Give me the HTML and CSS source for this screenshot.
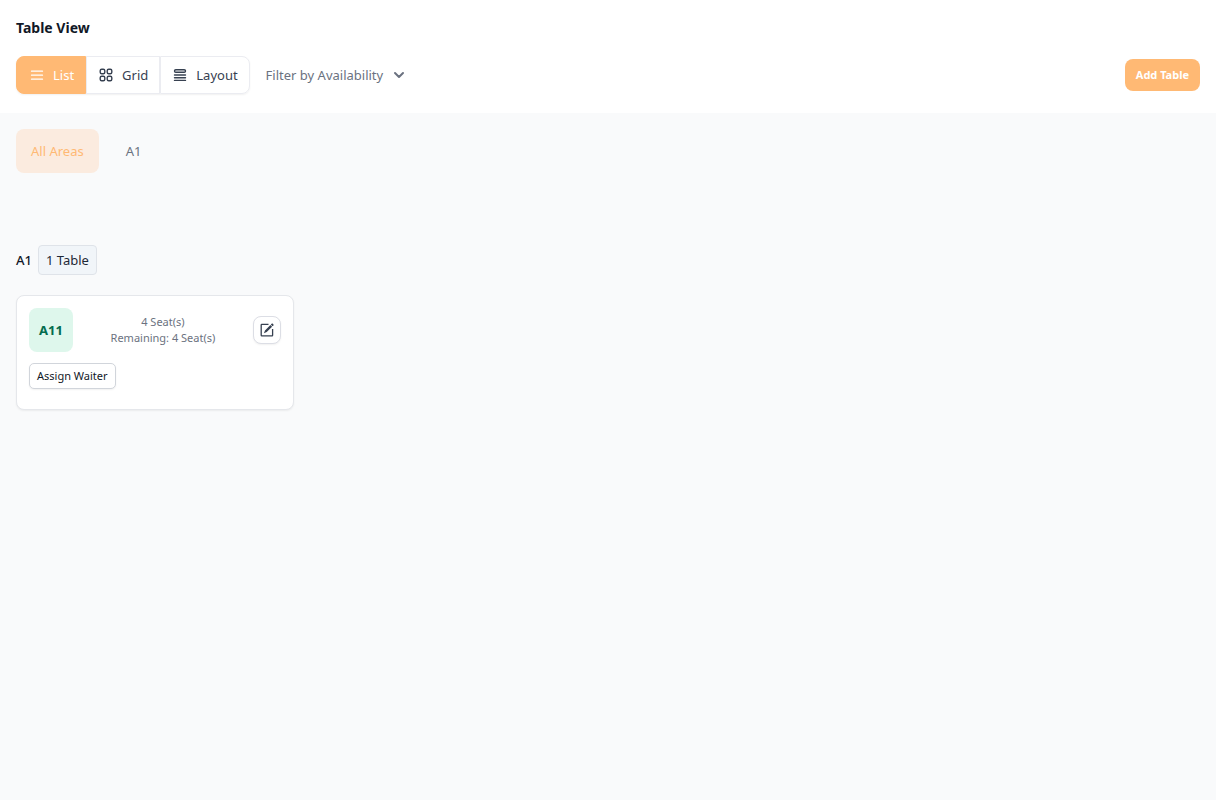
FILE: index.html
```html
<!DOCTYPE html>
<html lang="en">
<head>
  <meta charset="UTF-8" />
  <meta name="viewport" content="width=device-width, initial-scale=1.0" />
  <title>Table View</title>
  <link rel="stylesheet" href="styles.css">
</head>
<body>
  <header class="page-header">
    <h1>Table View</h1>
    <div class="toolbar">
      <div class="view-switch">
        <button type="button" class="active">
          <svg width="16" height="16" viewBox="0 0 16 16" fill="none" stroke="currentColor" stroke-width="1.3" stroke-linecap="round"><path d="M2.500 4.200h11M2.500 8.200h11M2.500 12.200h11"/></svg>
          List
        </button>
        <button type="button">
          <svg width="16" height="16" viewBox="0 0 16 16" fill="none" stroke="currentColor" stroke-width="1.400"><rect x="2.200" y="2.200" width="4.600" height="4.600" rx="1.500"/><rect x="9.200" y="2.200" width="4.600" height="4.600" rx="1.500"/><rect x="2.200" y="9.200" width="4.600" height="4.600" rx="1.500"/><rect x="9.200" y="9.200" width="4.600" height="4.600" rx="1.500"/></svg>
          Grid
        </button>
        <button type="button">
          <svg width="16" height="16" viewBox="0 0 16 16" fill="none" stroke="currentColor" stroke-width="1.400" stroke-linecap="round"><rect x="2.500" y="2.700" width="11" height="2.600" rx="1.300"/><path d="M2.500 8h11M2.500 10.700h11M2.500 13.400h11"/></svg>
          Layout
        </button>
      </div>
      <button type="button" class="filter">
        Filter by Availability
        <svg width="12" height="12" viewBox="0 0 12 12" fill="none" stroke="currentColor" stroke-width="2" stroke-linecap="round" stroke-linejoin="round"><path d="M2 4l4 4 4-4"/></svg>
      </button>
      <button type="button" class="add-table">Add Table</button>
    </div>
  </header>

  <main>
    <nav class="areas">
      <a href="#all" class="active">All Areas</a>
      <a href="#a1">A1</a>
    </nav>

    <section id="a1">
      <h2>A1 <span class="count">1 Table</span></h2>
      <div class="tables">
        <div class="card">
          <div class="card-top">
            <div class="code">A11</div>
            <div class="seats">
              <div>4 Seat(s)</div>
              <div>Remaining: 4 Seat(s)</div>
            </div>
            <button type="button" class="edit" aria-label="Edit table">
              <svg width="14" height="14" viewBox="0 0 14 14" fill="none" stroke="currentColor" stroke-linejoin="round"><path stroke-width="1.300" d="M8.500 1.300H1.800Q1.200 1.300 1.200 1.900V12.200Q1.200 12.800 1.800 12.800H12Q12.600 12.800 12.600 12.200V6"/><path fill="currentColor" stroke="none" d="M12.200.2l1.700 1.700-1.400 1.400-1.700-1.700zM10.400 2l1.700 1.700-5.400 5.400-2.800 1.100 1.100-2.800z"/></svg>
            </button>
          </div>
          <button type="button" class="assign">Assign Waiter</button>
        </div>
      </div>
    </section>
  </main>
</body>
</html>
```

FILE: styles.css
```css
* {
  box-sizing: border-box;
}
body {
  margin: 0;
  font-family: "Noto Sans", sans-serif;
  font-size: 13px;
  line-height: 20px;
  color: #111827;
  background: #f9fafb;
}
button {
  font: inherit;
  color: inherit;
  background: white;
  border: 1px solid #e5e7eb;
  cursor: pointer;
}
svg {
  flex: none;
}
h1, h2 {
  margin: 0;
}
.page-header {
  padding: 16px 16px 19px;
  background: white;
}
h1 {
  margin-bottom: 16px;
  font-size: 14px;
  line-height: 24px;
}
.toolbar {
  display: flex;
  align-items: center;
}
.view-switch {
  display: flex;
  border-radius: 8px;
  box-shadow: 0 1px 2px rgba(0,0,0,0.06);
}
.view-switch button {
  display: flex;
  align-items: center;
  gap: 8px;
  padding: 8px 11px;
  color: #374151;
  border-color: #ebecf1;
}
.view-switch button:first-child {
  padding-left: 12px;
  border-radius: 8px 0 0 8px;
}
.view-switch button:last-child {
  border-radius: 0 8px 8px 0;
}
.view-switch button.active {
  color: white;
  background: #ffb974;
  border-color: #ffb974;
}
.filter {
  display: flex;
  align-items: center;
  gap: 10px;
  margin-left: 16px;
  padding: 0;
  color: #6b7280;
  background: none;
  border: none;
}
.add-table {
  margin-left: auto;
  padding: 6px 11px;
  font-size: 11px;
  font-weight: 700;
  color: white;
  background: #ffb974;
  border: none;
  border-radius: 8px;
}
main {
  padding: 16px;
}
.areas {
  display: flex;
  gap: 12px;
  margin-bottom: 72px;
}
.areas a {
  padding: 12px 15px;
  color: #6b7280;
  text-decoration: none;
  border-radius: 8px;
}
.areas .active {
  color: #ffb974;
  background: #fbebdf;
}
h2 {
  display: flex;
  align-items: center;
  gap: 6px;
  margin-bottom: 20px;
  font-size: 13px;
  font-weight: 500;
}
.count {
  padding: 4px 7px;
  font-weight: 400;
  color: #1f2937;
  background: #f1f5f9;
  border: 1px solid #dfe3e9;
  border-radius: 4px;
}
.tables {
  display: grid;
  grid-template-columns: repeat(4, 1fr);
  gap: 24px;
}
.card {
  padding: 12px 12px 20px;
  background: white;
  border: 1px solid #e5e7eb;
  border-radius: 8px;
  box-shadow: 0 1px 2px rgba(0,0,0,0.06);
}
.card-top {
  display: flex;
  align-items: center;
  justify-content: space-between;
  margin-bottom: 11px;
}
.code {
  padding: 12px 10px;
  font-size: 13px;
  font-weight: 700;
  color: #046c4e;
  background: #def7ec;
  border-radius: 8px;
}
.seats {
  font-size: 11px;
  line-height: 16px;
  text-align: center;
  color: #6b7280;
}
.edit {
  display: flex;
  padding: 6px;
  color: #374151;
  border-color: #dcdee5;
  border-radius: 8px;
  box-shadow: 0 1px 2px rgba(0,0,0,0.06);
}
.assign {
  display: block;
  padding: 4px 7px;
  font-size: 11px;
  line-height: 16px;
  border-color: #d1d5db;
  border-radius: 5px;
  box-shadow: 0 1px 2px rgba(0,0,0,0.06);
}
```
